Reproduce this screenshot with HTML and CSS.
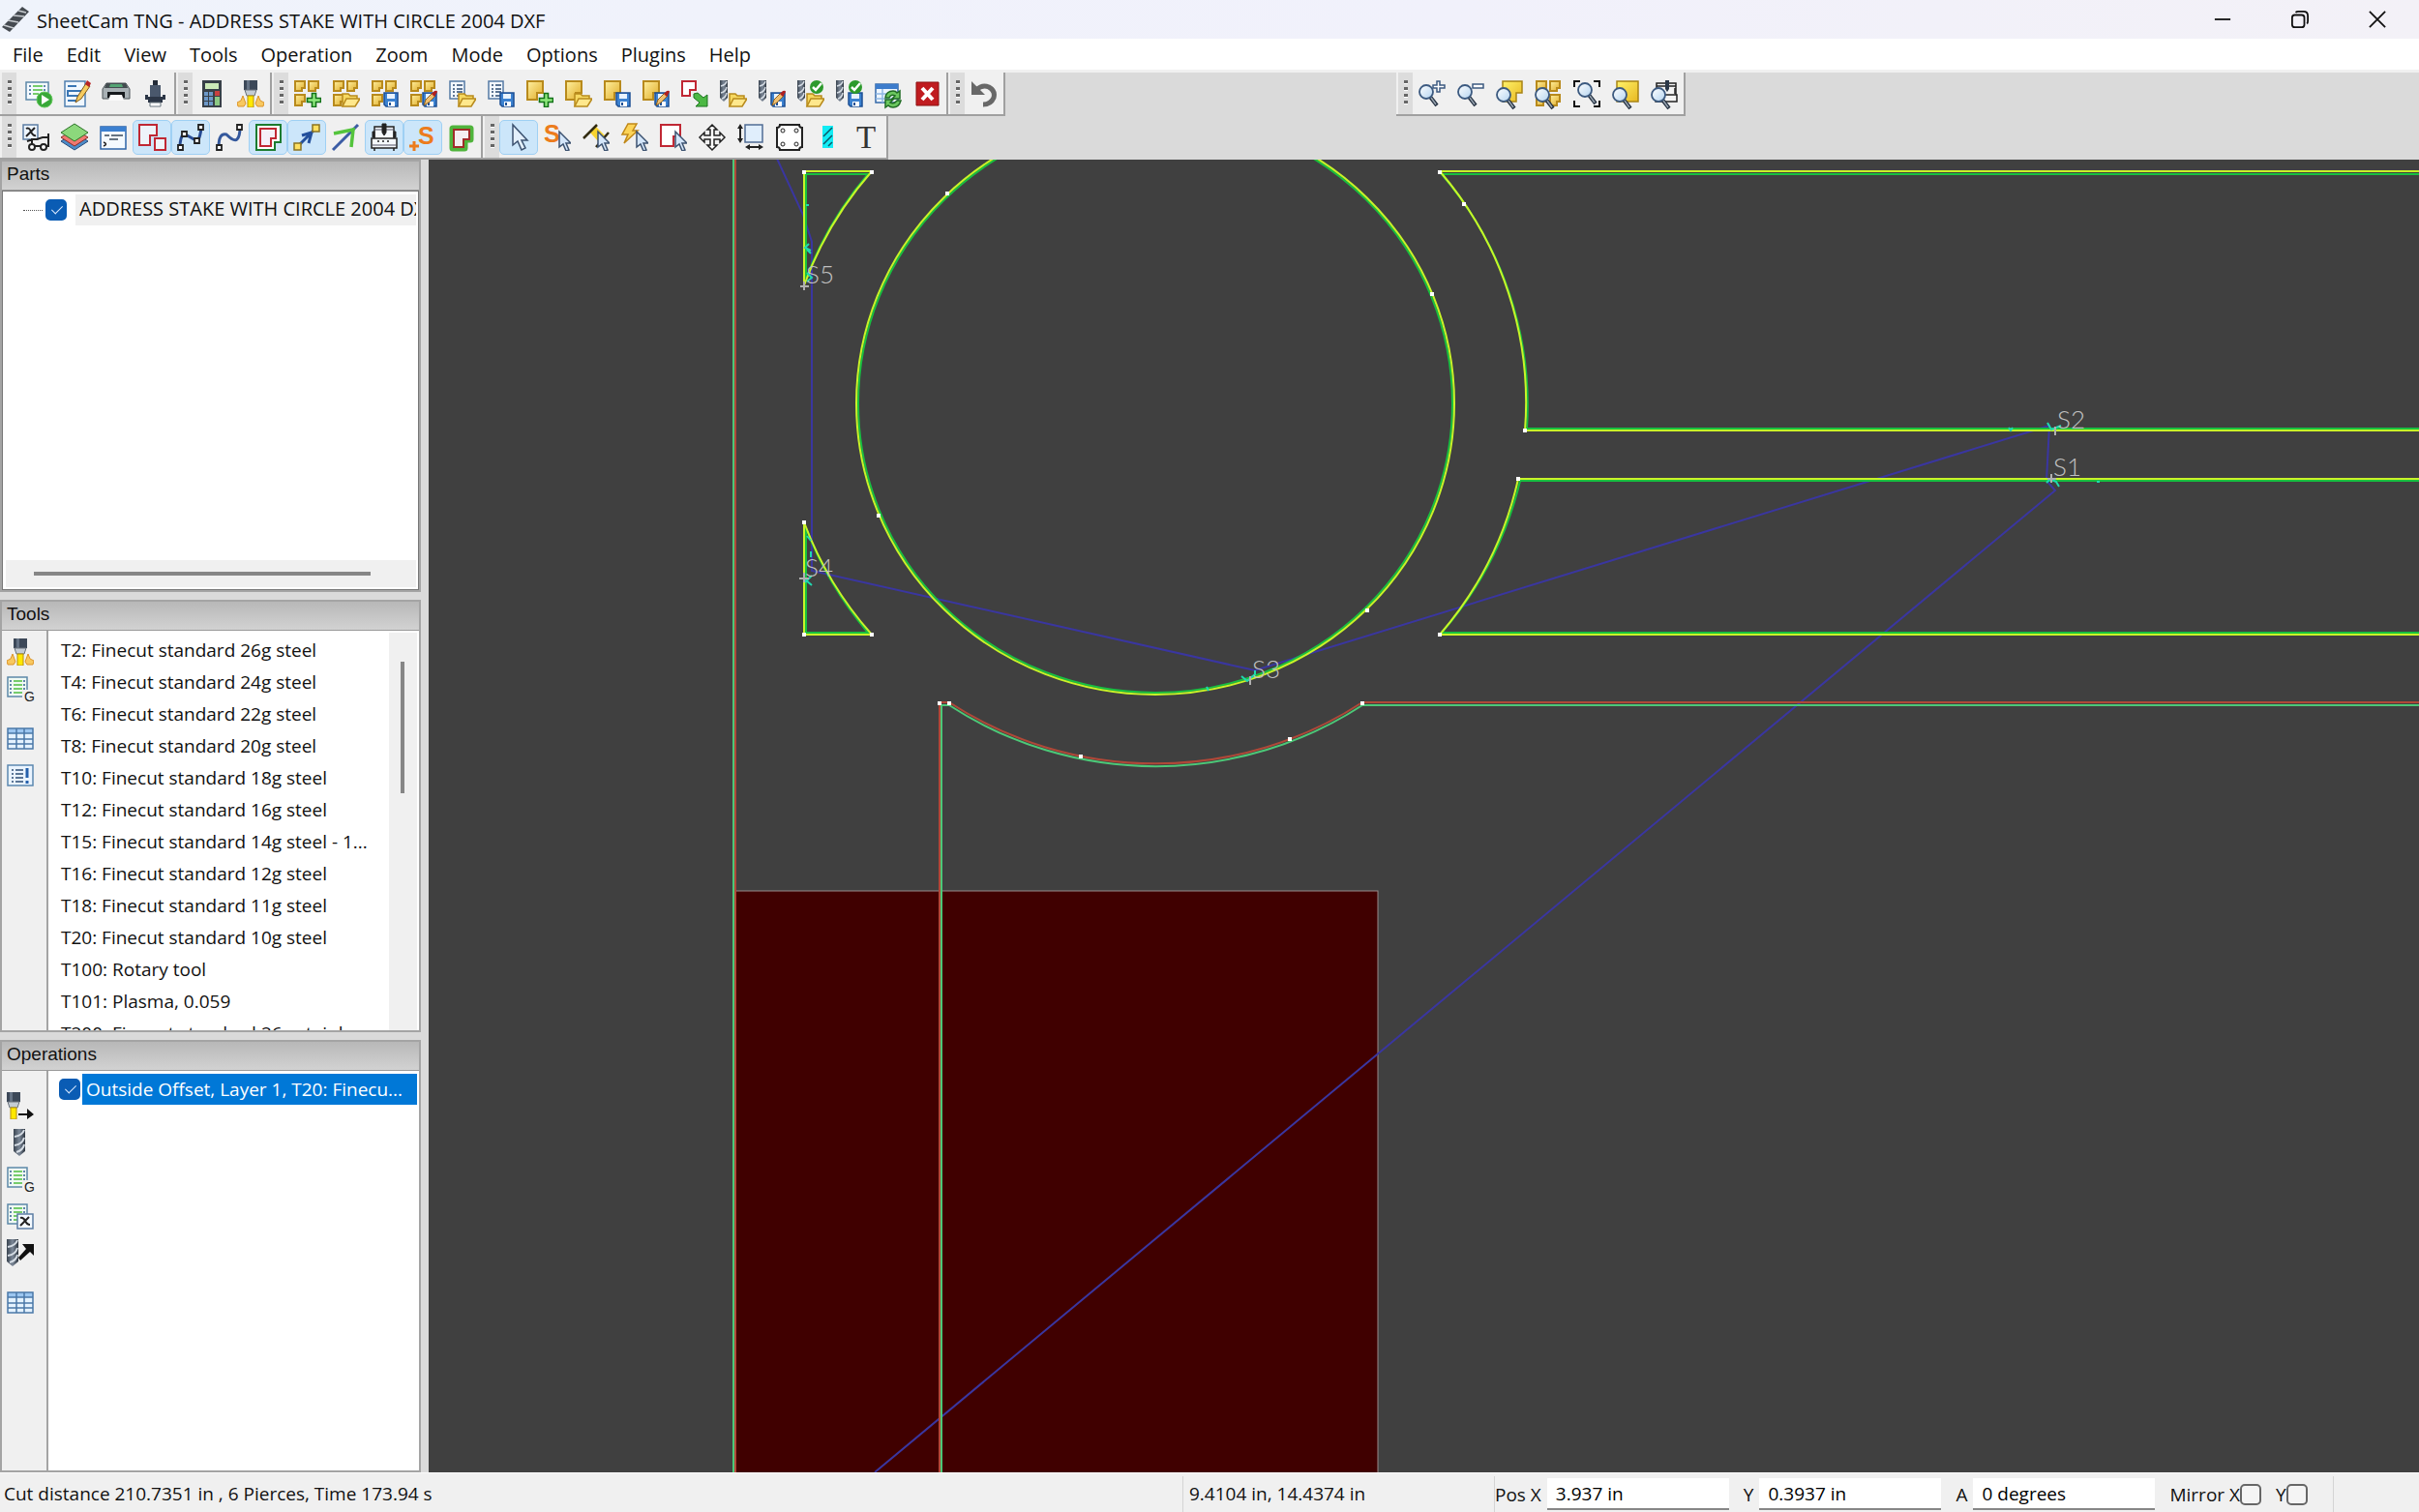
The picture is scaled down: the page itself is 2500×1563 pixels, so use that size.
FILE: index.html
```
<!DOCTYPE html>
<html lang="en">
<head>
  <meta charset="UTF-8">
  <meta name="viewport" content="width=device-width, initial-scale=1">
  <title>SheetCam TNG - ADDRESS STAKE WITH CIRCLE 2004 DXF</title>
  <link rel="stylesheet" href="styles.css">
</head>
<body>
  <!-- shared icon pieces -->
  <svg class="sprites" width="0" height="0" aria-hidden="true">
    <defs>
      <linearGradient id="gold" x1="0" y1="0" x2="1" y2="1"><stop offset="0" stop-color="#fff0a0"/><stop offset="1" stop-color="#e0ac28"/></linearGradient>
      <linearGradient id="goldBig" x1="0" y1="0" x2="1" y2="1"><stop offset="0" stop-color="#fff26a"/><stop offset="1" stop-color="#e8b820"/></linearGradient>
      <linearGradient id="steel" x1="0" x2="1"><stop offset="0" stop-color="#3a4450"/><stop offset=".5" stop-color="#7c8898"/><stop offset="1" stop-color="#2c343e"/></linearGradient>
      <linearGradient id="lens" x1="0" y1="0" x2="1" y2="1"><stop offset="0" stop-color="#fff"/><stop offset="1" stop-color="#b4d4f0"/></linearGradient>
    </defs>
    <symbol id="part" viewBox="0 0 28 28"><path d="M1 1h16v12h-6v7H1z" fill="url(#gold)" stroke="#b88a1c" stroke-width="2"/></symbol>
    <symbol id="parts" viewBox="0 0 28 28"><g fill="url(#gold)" stroke="#b88a1c" stroke-width="2"><path d="M1 1h10v7H8v3H1z"/><path d="M15 1h10v7h-3v3h-7z"/><path d="M1 15h10v7H8v4H1z"/></g></symbol>
    <symbol id="part4" viewBox="0 0 28 28"><path d="M15 15h10v7h-3v4h-7z" fill="url(#gold)" stroke="#b88a1c" stroke-width="2"/></symbol>
    <symbol id="folder" viewBox="0 0 28 28"><path d="M10 27V14h6l2 2h7v4" fill="#f6d860" stroke="#b88a1c" stroke-width="1.500"/><path d="M10 27l4-8h14l-5 8z" fill="#ffe88c" stroke="#b88a1c" stroke-width="1.500"/></symbol>
    <symbol id="disk" viewBox="0 0 28 28"><path d="M13 13h14v14H15l-2-2z" fill="#3c82d0" stroke="#1c4f94" stroke-width="1.500"/><path d="M16 14h8v5h-8z" fill="#e8f3ff"/><path d="M17 22h7v5h-7z" fill="#fff"/><path d="M18 23h2v3h-2z" fill="#1c4f94"/></symbol>
    <symbol id="plus" viewBox="0 0 28 28"><path d="M18.500 13.500h4v5h5v4h-5v5h-4v-5h-5v-4h5z" fill="#8ee87c" stroke="#127018" stroke-width="1.600"/></symbol>
    <symbol id="brush" viewBox="0 0 28 28"><path d="M14 26l2-6 7-7 3 3-7 7z" fill="#f0c070" stroke="#8c6020"/><path d="M22 14l3-3q3-1 3 1l-3 5z" fill="#b02020"/></symbol>
    <symbol id="doc" viewBox="0 0 28 28"><path d="M1 1h15v18H1z" fill="#f4f9ff" stroke="#5479a4" stroke-width="1.500"/><path d="M4 5h2m2 0h6M4 9h2m2 0h6M4 12h2m2 0h6M4 16h2m2 0h6" stroke="#2b4a70" stroke-width="1.500"/></symbol>
    <symbol id="bit" viewBox="0 0 28 28"><path d="M0 0h8v18l-4 4-4-4z" fill="url(#steel)"/><path d="M1 6q5-1 6-5M1 13q5-1 6-6M2 19q4-1 5-6" fill="none" stroke="#d5dce4" stroke-width="1.500"/></symbol>
    <symbol id="ok" viewBox="0 0 28 28"><circle cx="20" cy="7" r="7" fill="#2c9a2c"/><path d="M16 7l3 3 6-7" fill="none" stroke="#fff" stroke-width="2.500"/></symbol>
    <symbol id="glass" viewBox="0 0 28 28"><path d="M12 17l7 9" stroke="#243040" stroke-width="4"/><path d="M13 18l5 7" stroke="#98a4b0" stroke-width="1.500"/><circle cx="8" cy="12" r="7" fill="url(#lens)" stroke="#3c5a80" stroke-width="1.800"/></symbol>
    <symbol id="arrow" viewBox="0 0 28 28"><path d="M16 8v16l4-3 3 7 3-1-3-7h5z" fill="#d4e6fa" stroke="#3c5270" stroke-width="1.500"/></symbol>
    <symbol id="torch" viewBox="0 0 28 28"><path d="M7 0h14v10H7z" fill="#3c4858"/><path d="M10 0h3v10h-3z" fill="#647284"/><path d="M8 10h12l-2 6h-8z" fill="#c4ccd4" stroke="#68707a"/><path d="M11 16h6v12h-6z" fill="#ffe800" stroke="#b89000"/></symbol>
    <symbol id="sparks" viewBox="0 0 28 28"><path d="M6 16L4 21l-4 2 1 4h6l2-3zM22 16l2 5 4 2-1 4h-6l-2-3z" fill="#f8c860" stroke="#dc9428"/></symbol>
    <symbol id="sheet" viewBox="0 0 28 28"><path d="M1 2h20v20H1z" fill="#f0faf4" stroke="#5c88a8" stroke-width="1.500"/><path d="M3 6h2m12 0h2M3 10h2m12 0h2M3 14h2m12 0h2M3 18h2m12 0h2" stroke="#306090" stroke-width="1.500"/><path d="M7 6h9M7 10h9M7 14h9M7 18h9" stroke="#76cc6c" stroke-width="2"/></symbol>
    <symbol id="grid" viewBox="0 0 28 28"><path d="M1 3h26v21H1z" fill="#e4f2ff"/><path d="M1 3h26v5H1z" fill="#9cc6f0"/><path d="M1 3h26v21H1zM10 3v21M18 3v21M1 8h26M1 14h26M1 19h26" fill="none" stroke="#4a78a8" stroke-width="1.500"/></symbol>
  </svg>

  <div class="window">
    <header class="titlebar">
      <svg class="app-icon" viewBox="0 0 28 28"><path d="M0 22L21 1l7 5L8 27z" fill="#454a50"/><path d="M2 20l10 3M6 15l11 2M12 10l11 1M17 5l8 2" stroke="#c8ccd0" stroke-width="1.500"/></svg>
      <h1>SheetCam TNG - ADDRESS STAKE WITH CIRCLE 2004 DXF</h1>
      <div class="window-buttons">
        <button aria-label="Minimize"><svg viewBox="0 0 20 20"><path d="M1 10h18"/></svg></button>
        <button aria-label="Restore"><svg viewBox="0 0 20 20"><rect x="1" y="5" width="14" height="14" rx="3"/><path d="M5 2q1-1 3-1h6q5 0 5 5v6q0 2-1 3"/></svg></button>
        <button aria-label="Close"><svg viewBox="0 0 20 20"><path d="M1 1l18 18M19 1L1 19"/></svg></button>
      </div>
    </header>

    <nav class="menu">
      <a href="#file">File</a>
      <a href="#edit">Edit</a>
      <a href="#view">View</a>
      <a href="#tools">Tools</a>
      <a href="#operation">Operation</a>
      <a href="#zoom">Zoom</a>
      <a href="#mode">Mode</a>
      <a href="#options">Options</a>
      <a href="#plugins">Plugins</a>
      <a href="#help">Help</a>
    </nav>

    <div class="toolbars">
      <div class="toolbar-row">
        <div class="toolbar post-bar">
          <span class="grip"></span>
          <button aria-label="Run post"><svg viewBox="0 0 28 28"><path d="M1 2h23v18H1z" fill="#f4faff" stroke="#5c88a8" stroke-width="1.500"/><path d="M4 6h2m13 0h2M4 10h2m13 0h2M4 14h2" stroke="#306090" stroke-width="1.500"/><path d="M8 6h10M8 10h10M8 14h6" stroke="#76cc6c" stroke-width="2"/><circle cx="20" cy="20" r="8" fill="#38a838" stroke="#64c85c"/><path d="M17 15l8 5-8 5z" fill="#fff"/></svg></button>
          <button aria-label="Edit post"><svg viewBox="0 0 28 28"><path d="M1 1h21v26H1z" fill="#f0f7ff" stroke="#4f7fae" stroke-width="1.500"/><path d="M4 6h9M4 11h14v5H4zM4 21h9" fill="none" stroke="#3a76b4" stroke-width="2"/><path d="M12 23l2-6L23 3l4 3-9 13z" fill="#f6cc60" stroke="#805818"/><path d="M22 4l2-4 4 3-2 4z" fill="#b82424"/></svg></button>
          <button aria-label="Print"><svg viewBox="0 0 28 28"><path d="M4 3h20l4 6v10H0V9z" fill="#a8b0b4" stroke="#4c5458"/><path d="M4 3h20l2 5H2z" fill="#444c50"/><path d="M8 4h12l1 3H7z" fill="#54a474"/><path d="M5 12h18v6H5z" fill="#16191c"/><path d="M8 15h12l2 6H6z" fill="#fafafa"/></svg></button>
          <button aria-label="Machine"><svg viewBox="0 0 28 28"><path d="M12 0h5v5h-5z" fill="#242c38"/><path d="M9 5h11v12H9z" fill="#4a586c"/><path d="M4 15h3v2h15v-2h3v5h-3v3H7v-3H4z" fill="#2c3646"/><path d="M9 23h11v4H9z" fill="#fff" stroke="#68747e"/></svg></button>
        </div>
        <div class="toolbar">
          <span class="grip"></span>
          <button aria-label="Calculator"><svg viewBox="0 0 28 28"><path d="M4 0h20v28H4z" fill="#384048"/><path d="M7 3h14v6H7z" fill="#cceab8"/><path d="M6 12h4v4H6zM11 12h4v4h-4zM6 17h4v4H6zM11 17h4v4h-4zM6 22h4v4H6zM11 22h4v4h-4z" fill="#6c98c8"/><path d="M17 11h5v5h-5z" fill="#c84040"/><path d="M17 17h5v9h-5z" fill="#8cc884"/></svg></button>
          <button aria-label="Plasma tool"><svg viewBox="0 0 28 28"><use href="#sparks"/><use href="#torch"/></svg></button>
        </div>
        <div class="toolbar">
          <span class="grip"></span>
          <button aria-label="New job"><svg viewBox="0 0 28 28"><use href="#parts"/><use href="#plus"/></svg></button>
          <button aria-label="Open job"><svg viewBox="0 0 28 28"><use href="#parts"/><use href="#folder"/></svg></button>
          <button aria-label="Save job"><svg viewBox="0 0 28 28"><use href="#parts"/><use href="#disk"/></svg></button>
          <button aria-label="Save job as"><svg viewBox="0 0 28 28"><use href="#parts"/><use href="#disk"/><use href="#brush"/></svg></button>
          <button aria-label="Open options"><svg viewBox="0 0 28 28"><use href="#doc"/><use href="#folder"/></svg></button>
          <button aria-label="Save options"><svg viewBox="0 0 28 28"><use href="#doc"/><use href="#disk"/></svg></button>
          <button aria-label="New part"><svg viewBox="0 0 28 28"><use href="#part"/><use href="#plus"/></svg></button>
          <button aria-label="Open part"><svg viewBox="0 0 28 28"><use href="#part"/><use href="#folder"/></svg></button>
          <button aria-label="Save part"><svg viewBox="0 0 28 28"><use href="#part"/><use href="#disk"/></svg></button>
          <button aria-label="Save part as"><svg viewBox="0 0 28 28"><use href="#part"/><use href="#disk"/><use href="#brush"/></svg></button>
          <button aria-label="Import drawing"><svg viewBox="0 0 28 28"><path d="M1 1h14v9H9v6H1z" fill="#fff" stroke="#c02834" stroke-width="2"/><path d="M13 14l4-1 6 5 4-3v12H15l4-4-6-5z" fill="#4cb844" stroke="#1c7420"/></svg></button>
          <button aria-label="Open tools"><svg viewBox="0 0 28 28"><use href="#bit"/><use href="#folder"/></svg></button>
          <button aria-label="Save tools"><svg viewBox="0 0 28 28"><use href="#bit"/><use href="#disk"/><use href="#brush"/></svg></button>
          <button aria-label="Open default tools"><svg viewBox="0 0 28 28"><use href="#bit"/><use href="#folder"/><use href="#ok"/></svg></button>
          <button aria-label="Save default tools"><svg viewBox="0 0 28 28"><use href="#bit"/><use href="#disk"/><use href="#ok"/></svg></button>
          <button aria-label="Reload"><svg viewBox="0 0 28 28"><path d="M1 4h23v19H1z" fill="#eef6ff" stroke="#3468a8" stroke-width="1.500"/><path d="M1 4h23v5H1z" fill="#3c7ccc"/><path d="M1 14h22M1 19h22M8 9v14" stroke="#90b8e4" stroke-width="1.500"/><path d="M11 18q1-7 8-7 3 0 4 2l3-2v8h-8l3-3q-4-2-6 2zM27 21q-2 7-8 7-3 0-5-2l-3 2v-8h8l-3 3q4 2 7-2z" fill="#6cc860" stroke="#206c24" stroke-width="1.500"/></svg></button>
          <button aria-label="Close job"><svg viewBox="0 0 28 28"><path d="M3 2h23v24H3z" fill="#c01c20" stroke="#8c1010"/><path d="M9 8l11 12M20 8L9 20" stroke="#fff" stroke-width="4"/></svg></button>
        </div>
        <div class="toolbar">
          <span class="grip"></span>
          <button aria-label="Undo"><svg viewBox="0 0 28 28"><path d="M6 10q6-6 13-3 7 4 5 11-3 7-11 7" fill="none" stroke="#686868" stroke-width="5"/><path d="M1 1v14h14z" fill="#686868"/></svg></button>
        </div>
        <div class="toolbar zoom-bar">
          <span class="grip"></span>
          <button aria-label="Zoom in"><svg viewBox="0 0 28 28"><use href="#glass"/><path d="M19 1h3v4h5v3h-5v4h-3V8h-4V5h4z" fill="#fff" stroke="#3c5a80" stroke-width="1.500"/></svg></button>
          <button aria-label="Zoom out"><svg viewBox="0 0 28 28"><use href="#glass"/><path d="M16 4h11v4H16z" fill="#fff" stroke="#3c5a80" stroke-width="1.500"/></svg></button>
          <button aria-label="Zoom to part"><svg viewBox="0 0 28 28"><path d="M7 1h20v12h-6v9H7z" fill="url(#goldBig)" stroke="#a88414" stroke-width="1.500"/><use href="#glass" y="3"/></svg></button>
          <button aria-label="Zoom to job"><svg viewBox="0 0 28 28"><use href="#parts" x="1"/><use href="#part4" x="1"/><use href="#glass" y="3"/></svg></button>
          <button aria-label="Zoom to window"><svg viewBox="0 0 28 28"><use href="#glass" x="4" y="-2"/><path d="M1 7V1h6M21 1h6v6M1 21v6h6M21 27h6v-6" fill="none" stroke="#111" stroke-width="2"/></svg></button>
          <button aria-label="Zoom to material"><svg viewBox="0 0 28 28"><path d="M5 1h22v21H5z" fill="url(#goldBig)" stroke="#a88414" stroke-width="1.500"/><use href="#glass" y="3"/></svg></button>
          <button aria-label="Zoom to machine"><svg viewBox="0 0 28 28"><path d="M6 3h20v12H6zM5 15h22v7H5z" fill="#f4f4f4" stroke="#222" stroke-width="1.500"/><path d="M6 6h20M7 8v6M25 8v6" stroke="#222" stroke-width="1.500"/><path d="M15 0h4v9l-2 3-2-3z" fill="#2c3848"/><use href="#glass" y="3"/></svg></button>
        </div>
      </div>

      <div class="toolbar-row">
        <div class="toolbar">
          <span class="grip"></span>
          <button aria-label="Set variables"><svg viewBox="0 0 28 28"><path d="M1 1h15v15H1z" fill="#eef6ff" stroke="#5c7ea4" stroke-width="1.500"/><path d="M4 5q3-2 5 3t5 4M13 4L4 13" fill="none" stroke="#222" stroke-width="2"/><path d="M27 10v13H10v-7h5l6-2h6M5 18l6-2" fill="none" stroke="#222" stroke-width="2"/><circle cx="10" cy="24" r="3" fill="#fff" stroke="#222" stroke-width="2"/><circle cx="22" cy="24" r="3" fill="#fff" stroke="#222" stroke-width="2"/></svg></button>
          <button aria-label="Layers"><svg viewBox="0 0 28 28"><path d="M14 9l14 9-14 9-14-9z" fill="#4c8cc8" stroke="#284c7c"/><path d="M14 5l14 9-14 9-14-9z" fill="#f07870" stroke="#8c2c28"/><path d="M14 0l14 9-14 9L0 9z" fill="#8cd87c" stroke="#2c7428"/></svg></button>
          <button aria-label="Code window"><svg viewBox="0 0 28 28"><path d="M1 3h26v23H1z" fill="#f4faff" stroke="#2c64a8" stroke-width="1.500"/><path d="M1 3h26v5H1z" fill="#3c80d0"/><path d="M5 12h5m2 0h12M10 16h9" stroke="#384858" stroke-width="1.500"/><path d="M4 19q5 2 0 4" fill="none" stroke="#222" stroke-width="1.500"/></svg></button>
          <button class="on" aria-label="Show parts"><svg viewBox="0 0 28 28"><g fill="#eef4fa" stroke="#c02834" stroke-width="2"><path d="M1 1h18v11h-7v10H1z"/><path d="M17 15h11v12H17z"/></g></svg></button>
          <button class="on" aria-label="Show nodes"><svg viewBox="0 0 28 28"><path d="M3 24q0-10 4-14l14 8q3-4 4-14" fill="none" stroke="#284c94" stroke-width="3"/><g fill="#fff" stroke="#222" stroke-width="1.800"><path d="M1 22h5v5H1zM5 8h5v5H5zM18 15h5v5h-5zM22 1h5v5h-5z"/></g></svg></button>
          <button aria-label="Show path ends"><svg viewBox="0 0 28 28"><path d="M3 24q0-15 8-13 8 8 11 5 3-3 3-12" fill="none" stroke="#34589c" stroke-width="3"/><g fill="#fff" stroke="#222" stroke-width="1.800"><path d="M1 22h5v5H1zM22 1h5v5h-5z"/></g></svg></button>
          <button class="on" aria-label="Show tool width"><svg viewBox="0 0 28 28"><path d="M2 1h25v18h-6v8H2z" fill="#fff" stroke="#1c7c30" stroke-width="2"/><path d="M6 5h16v10h-5v8H6z" fill="#f4f0f8" stroke="#c02834" stroke-width="2"/></svg></button>
          <button class="on" aria-label="Show rapids"><svg viewBox="0 0 28 28"><path d="M4 24L23 5M9 12l10-3-3 11" fill="none" stroke="#24509c" stroke-width="3"/><g fill="#ffe060" stroke="#8c7420" stroke-width="1.500"><path d="M1 20h7v7H1zM20 1h7v7h-7z"/></g></svg></button>
          <button aria-label="Show direction"><svg viewBox="0 0 28 28"><path d="M1 27L27 1" stroke="#3c5ca4" stroke-width="3"/><path d="M2 10l20-4-2 18" fill="none" stroke="#54c43c" stroke-width="3.500"/></svg></button>
          <button class="on" aria-label="Show machine"><svg viewBox="0 0 28 28"><path d="M4 3h20v12H4zM1 15h26v10H1z" fill="#f4f8fc" stroke="#222" stroke-width="1.500"/><path d="M4 6h20M2 22h24" stroke="#556"/><path d="M2 8h2v6H2zM24 8h2v6h-2zM12 0h4v9l-2 3-2-3z" fill="#222" stroke="#222"/><path d="M7 18h2m3 0h2m3 0h2M4 25v3m20-3v3" stroke="#222" stroke-width="1.500"/></svg></button>
          <button class="on" aria-label="Show start points"><svg viewBox="0 0 28 28"><text class="icon-s" x="9" y="21">S</text><path d="M5 18v10M0 23h10" stroke="#ec7c1c" stroke-width="3"/></svg></button>
          <button aria-label="Show cut width"><svg viewBox="0 0 28 28"><path d="M5 5h18v11h-6v9H5z" fill="#fff" stroke="#50b43c" stroke-width="7" stroke-linejoin="round"/><path d="M6 6h16v10h-6v8H6z" fill="#f4eef0" stroke="#a02c28" stroke-width="2"/></svg></button>
        </div>
        <div class="toolbar">
          <span class="grip"></span>
          <button class="on" aria-label="Select"><svg viewBox="0 0 28 28"><path d="M8 1v21l5-4 4 9 4-2-4-8h6z" fill="#e4f0fc" stroke="#3c5270" stroke-width="1.500"/></svg></button>
          <button aria-label="Edit start points"><svg viewBox="0 0 28 28"><text class="icon-s" x="0" y="19">S</text><use href="#arrow"/></svg></button>
          <button aria-label="Edit tabs"><svg viewBox="0 0 28 28"><path d="M8 9l6-6 9 9-6 7z" fill="#f8d430"/><path d="M1 15L15 1M14 24L27 9" stroke="#332c10" stroke-width="2.500"/><use href="#arrow"/></svg></button>
          <button aria-label="Edit cutting order"><svg viewBox="0 0 28 28"><path d="M7 0h9l-4 7h5L3 20l4-9H1z" fill="#fcd458" stroke="#c08818" stroke-width="1.500"/><use href="#arrow"/></svg></button>
          <button aria-label="Edit contours"><svg viewBox="0 0 28 28"><path d="M1 1h20v12h-7v10H1z" fill="#fff" stroke="#c02834" stroke-width="2"/><use href="#arrow"/></svg></button>
          <button aria-label="Move parts"><svg viewBox="0 0 28 28"><path d="M14 1l5 5h-3v6h6V9l5 5-5 5v-3h-6v6h3l-5 5-5-5h3v-6H6v3l-5-5 5-5v3h6V6H9z" fill="#fff" stroke="#222" stroke-width="1.500"/></svg></button>
          <button aria-label="Set origin"><svg viewBox="0 0 28 28"><path d="M8 1h18v18H8z" fill="#e0eefc" stroke="#506c94" stroke-width="1.500"/><path d="M3 2v15M10 24h15" stroke="#222" stroke-width="2"/><path d="M0 5l3-5 3 5zM0 15l3 5 3-5zM13 21l-5 3 5 3zM22 21l5 3-5 3z" fill="#222"/></svg></button>
          <button aria-label="Nesting"><svg viewBox="0 0 28 28"><path d="M4 1h20q0 3 3 3v20q-3 0-3 3H4q0-3-3-3V4q3 0 3-3z" fill="#fff" stroke="#222" stroke-width="2"/><g fill="none" stroke="#222"><circle cx="7" cy="7" r="2"/><circle cx="21" cy="7" r="2"/><circle cx="7" cy="21" r="2"/><circle cx="21" cy="21" r="2"/></g></svg></button>
          <button aria-label="Measure"><svg viewBox="0 0 28 28"><path d="M8 2h11v23H8z" fill="#12ecf4"/><path d="M9 13l9-9M9 21l9-9M14 23l4-4" stroke="#0c5868" stroke-width="1.500"/></svg></button>
          <button aria-label="Text"><svg viewBox="0 0 28 28"><text class="icon-t" x="3" y="25">T</text></svg></button>
        </div>
      </div>
    </div>

    <main>
      <aside>
        <section class="panel">
          <h2>Parts</h2>
          <div class="panel-body tree">
            <div class="tree-row">
              <span class="branch"></span>
              <input type="checkbox" id="part1" checked>
              <label for="part1">ADDRESS STAKE WITH CIRCLE 2004 DXF</label>
            </div>
            <div class="h-scroll"><span></span></div>
          </div>
        </section>

        <section class="panel">
          <h2>Tools</h2>
          <div class="panel-body">
            <div class="side-tools">
              <button aria-label="New plasma tool"><svg viewBox="0 0 28 28"><use href="#sparks"/><use href="#torch"/></svg></button>
              <button aria-label="New code tool"><svg viewBox="0 0 28 28"><use href="#sheet"/><path d="M16 15h12v13H16z" fill="#f0f0f0"/><text class="icon-g" x="18" y="27">G</text></svg></button>
              <button class="spaced" aria-label="Tool table"><svg viewBox="0 0 28 28"><use href="#grid"/></svg></button>
              <button aria-label="Tool notes"><svg viewBox="0 0 28 28"><path d="M1 3h26v21H1z" fill="#eaf4ff" stroke="#5c88b0" stroke-width="1.500"/><path d="M5 8h2m2 0h8M5 12h2m2 0h8M5 16h2m2 0h8M5 20h2m2 0h8" stroke="#2c4c74" stroke-width="1.500"/><path d="M21 6v10M21 19v3" stroke="#2460ac" stroke-width="3"/></svg></button>
            </div>
            <ul class="list">
              <li>T2: Finecut standard 26g steel</li>
              <li>T4: Finecut standard 24g steel</li>
              <li>T6: Finecut standard 22g steel</li>
              <li>T8: Finecut standard 20g steel</li>
              <li>T10: Finecut standard 18g steel</li>
              <li>T12: Finecut standard 16g steel</li>
              <li>T15: Finecut standard 14g steel - 1...</li>
              <li>T16: Finecut standard 12g steel</li>
              <li>T18: Finecut standard 11g steel</li>
              <li>T20: Finecut standard 10g steel</li>
              <li>T100: Rotary tool</li>
              <li>T101: Plasma, 0.059</li>
              <li>T200: Finecut standard 26g stainl</li>
            </ul>
            <div class="v-scroll"><span></span></div>
          </div>
        </section>

        <section class="panel">
          <h2>Operations</h2>
          <div class="panel-body">
            <div class="side-tools lower">
              <button aria-label="New cut"><svg viewBox="0 0 28 28"><use href="#torch" x="-7"/><path d="M12 22h9v-5l7 6-7 5v-4h-9z" fill="#111"/></svg></button>
              <button aria-label="New drill"><svg viewBox="0 0 28 28"><path d="M7 0h12v23l-6 5-6-5z" fill="url(#steel)"/><path d="M8 8q8-1 10-7M8 17q8-1 10-8M10 24q7-2 8-8" fill="none" stroke="#d5dce4" stroke-width="2"/></svg></button>
              <button aria-label="New code"><svg viewBox="0 0 28 28"><use href="#sheet"/><path d="M16 15h12v13H16z" fill="#f0f0f0"/><text class="icon-g" x="18" y="27">G</text></svg></button>
              <button aria-label="New variable"><svg viewBox="0 0 28 28"><use href="#sheet"/><path d="M11 12h16v15H11z" fill="#f4faff" stroke="#5c7ea4" stroke-width="1.500"/><path d="M14 16q3-1 5 3t5 4M23 15l-9 9" fill="none" stroke="#222" stroke-width="2"/></svg></button>
              <button aria-label="Move tool"><svg viewBox="0 0 28 28"><path d="M0 0h12v23l-6 5-6-5z" fill="url(#steel)"/><path d="M1 8q8-1 10-7M1 17q8-1 10-8M3 24q7-2 8-8" fill="none" stroke="#d5dce4" stroke-width="2"/><path d="M12 19l8-9-4-5h12v12l-4-4-10 9z" fill="#111"/></svg></button>
              <button class="spaced" aria-label="Operation table"><svg viewBox="0 0 28 28"><use href="#grid"/></svg></button>
            </div>
            <div class="operations">
              <input type="checkbox" id="op1" checked>
              <label for="op1">Outside Offset, Layer 1, T20: Finecu...</label>
            </div>
          </div>
        </section>
      </aside>

      <svg class="drawing" viewBox="443 165 2057 1357" preserveAspectRatio="xMinYMin slice" role="img" aria-label="Part drawing">
        <!-- material -->
        <rect x="760" y="921" width="664" height="620" fill="#400000" stroke="#9a8a8a"/>
        <path class="red" d="M760 164V1540"/>
        <path class="mint" d="M758 164V1540"/>

        <!-- rapid moves -->
        <path class="rapid" d="M803 164L830 222L839 250V590L1297 693L2118 440L2115 497L2124 507L904 1522"/>

        <!-- outside contour -->
        <path class="red" d="M971 1540V726H981A383 373 0 0 0 1408 726H2520"/>
        <path class="mint" d="M973 1540V729H981A384 374 0 0 0 1408 729H2520"/>

        <!-- inside contours -->
        <g class="green">
          <ellipse cx="1194" cy="417" rx="307" ry="299"/>
          <path d="M833 180H897A383 373 0 0 0 833 288Z"/>
          <path d="M833 546V654H897A383 373 0 0 1 833 546Z"/>
          <path d="M2520 180H1490A384 374 0 0 1 1578 443H2520"/>
          <path d="M2520 497H1571A384 374 0 0 1 1490 654H2520"/>
        </g>
        <g class="yellow">
          <ellipse cx="1194" cy="417" rx="309" ry="301"/>
          <path d="M831 177H901A383 373 0 0 0 831 295Z"/>
          <path d="M831 540V656H901A383 373 0 0 1 831 540Z"/>
          <path d="M2520 177H1488A383 373 0 0 1 1576 445H2520"/>
          <path d="M2520 495H1569A383 373 0 0 1 1488 656H2520"/>
        </g>

        <!-- nodes -->
        <path class="node" d="M831 178h0M901 178h0M831 540h0M831 656h0M901 656h0M979 200h0M908 533h0M1413 631h0M1480 304h0M1488 178h0M1513 211h0M1576 445h0M1569 495h0M1488 656h0M971 727h0M981 727h0M1117 782h0M1333 764h0M1408 727h0"/>

        <!-- start points -->
        <path class="lead" d="M833 212h3M836 252l-4 4 6 3M838 262l-4-4M834 282l5 5-5 4M834 554l4 5M838 570v6M832 602l7-7M832 599l7 6M1283 699l6 5 8-7v-4M1247 710l2 4M2116 437l4 7 10-4M2076 442l2 3 2-3M2115 499l4-4 6 3 3 5M2167 498h3"/>
        <path class="start" d="M831 291v9M827 296h9M831 592v10M826 598h10M1292 699v9M2124 441v9M2120 490v9M2116 495h9"/>
        <g class="label">
          <text x="833" y="293">S5</text>
          <text x="832" y="596">S4</text>
          <text x="1294" y="701">S3</text>
          <text x="2126" y="443">S2</text>
          <text x="2122" y="492">S1</text>
        </g>
      </svg>
    </main>

    <footer class="status">
      <span class="summary">Cut distance 210.7351 in , 6 Pierces, Time 173.94 s</span>
      <span class="cursor-pos">9.4104 in, 14.4374 in</span>
      <div class="position">
        <label for="posx">Pos X</label><input type="text" id="posx" value="3.937 in">
        <label for="posy">Y</label><input type="text" id="posy" value="0.3937 in">
        <label for="posa">A</label><input type="text" id="posa" value="0 degrees">
        <label for="mirx">Mirror X</label><input type="checkbox" id="mirx">
        <label for="miry">Y</label><input type="checkbox" id="miry">
      </div>
      <span class="status-end"></span>
    </footer>
  </div>
</body>
</html>
```
FILE: styles.css
```
* {
  box-sizing: border-box;
}

body {
  margin: 0;
  font-family: "Open Sans", "Noto Sans", sans-serif;
  font-size: 19px;
  color: #111;
}

button {
  padding: 0;
  border: 0;
  background: none;
}

svg {
  overflow: visible;
}

.sprites {
  position: absolute;
}

.window {
  display: flex;
  flex-direction: column;
  height: 100vh;
  overflow: hidden;
}

/* title bar and menu */
.titlebar {
  display: flex;
  align-items: center;
  flex: none;
  height: 40px;
  padding: 0 13px 0 2px;
  background: linear-gradient(90deg, #eff3fb, #f1f1fb 60%, #f3f1f7);
}

.app-icon {
  width: 28px;
  height: 28px;
}

h1 {
  flex: 1;
  margin: 2px 0 0 8px;
  font-size: 20px;
  font-weight: 400;
}

.window-buttons {
  display: flex;
  gap: 20px;
}

.window-buttons button {
  display: grid;
  place-items: center;
  width: 60px;
  height: 40px;
}

.window-buttons svg {
  width: 18px;
  height: 18px;
  fill: none;
  stroke: #111;
  stroke-width: 2;
}

.menu {
  display: flex;
  align-items: center;
  flex: none;
  gap: 24px;
  height: 35px;
  padding: 0 13px;
  background: #fff;
  border-bottom: 3px solid #f0f0f0;
  font-size: 20px;
}

.menu a {
  color: #111;
  text-decoration: none;
}

/* toolbars */
.toolbars {
  flex: none;
  height: 90px;
  background: #dadada;
}

.toolbar-row {
  display: flex;
  height: 45px;
}

.toolbar {
  display: flex;
  align-items: center;
  padding-left: 2px;
  background: #f0f0f0;
  border-right: 2px solid #a0a0a0;
  border-bottom: 2px solid #a0a0a0;
}

.toolbar button {
  width: 40px;
  height: 36px;
  padding: 2px 5px;
  border: 1px solid transparent;
  border-radius: 5px;
}

.toolbar button.on {
  background: #cce6fa;
  border-color: #9fd0f4;
}

.toolbar svg {
  display: block;
  width: 28px;
  height: 28px;
}

.post-bar .grip {
  margin-right: 3px;
}

.grip {
  align-self: stretch;
  display: grid;
  place-items: center;
  width: 15px;
  background: #dcdcdc;
}

.grip::before {
  content: "";
  width: 4px;
  height: 28px;
  background: repeating-linear-gradient(#666 0 3px, #fff 3px 4px, transparent 4px 7px);
}

.zoom-bar {
  margin-left: 404px;
}

.icon-s {
  font: bold 25px "Liberation Sans", sans-serif;
  fill: #ec7c1c;
}

.icon-t {
  font: 33px "Liberation Serif", serif;
  fill: #333;
}

.icon-g {
  font: 14px "Liberation Sans", sans-serif;
  fill: #222;
}

/* left hand panels */
main {
  display: flex;
  flex: 1;
  min-height: 0;
}

aside {
  display: flex;
  flex-direction: column;
  flex: none;
  gap: 8px;
  width: 443px;
  padding-right: 8px;
  background: #dadada;
}

.panel {
  display: flex;
  flex-direction: column;
  flex: 1;
  min-height: 0;
  border: 2px solid #a4a4a4;
}

.panel h2 {
  flex: none;
  height: 30px;
  margin: 0;
  padding-left: 5px;
  background: linear-gradient(#b8b8b8, #d2d2d2);
  border-bottom: 1px solid #999;
  font: 19px/26px "Liberation Sans", sans-serif;
}

.panel-body {
  display: flex;
  flex: 1;
  min-height: 0;
  background: #fff;
  border-right: 2px solid #fff;
}

.tree {
  flex-direction: column;
  justify-content: space-between;
  padding: 3px 0 2px 3px;
  border: 1px solid #777;
}

.tree-row {
  display: flex;
  align-items: center;
  height: 32px;
  padding-left: 18px;
}

.branch {
  flex: none;
  width: 20px;
  margin-right: 3px;
  border-top: 1px dotted #555;
}

.tree-row label {
  flex: 1;
  height: 32px;
  margin: 0 2px 0 9px;
  padding-left: 4px;
  overflow: hidden;
  background: #f0f0f0;
  font-size: 20px;
  line-height: 30px;
  white-space: nowrap;
}

input[type="checkbox"] {
  flex: none;
  appearance: none;
  width: 22px;
  height: 22px;
  margin: 0;
  border: 2px solid #666;
  border-radius: 5px;
  background: #f4f4f4;
}

input[type="checkbox"]:checked {
  border-color: #0a5cb4;
  background: #0a5cb4;
}

input[type="checkbox"]:checked::before {
  content: "";
  display: block;
  width: 5px;
  height: 10px;
  margin: 2px 0 0 7px;
  border: solid #dceaff;
  border-width: 0 1px 1px 0;
  transform: rotate(45deg);
}

.h-scroll {
  height: 28px;
  margin-right: 2px;
  padding: 12px 47px 0 29px;
  background: #f0f0f0;
}

.h-scroll span {
  display: block;
  height: 4px;
  background: #868686;
}

.side-tools {
  display: flex;
  flex-direction: column;
  flex: none;
  gap: 10px;
  width: 48px;
  padding: 8px 5px;
  background: #f0f0f0;
  border-right: 2px solid #a4a4a4;
}

.side-tools.lower {
  padding-top: 22px;
}

.side-tools button {
  width: 28px;
  height: 28px;
}

.side-tools svg {
  display: block;
}

.side-tools .spaced {
  margin-top: 14px;
}

.list {
  flex: 1;
  margin: 0;
  padding: 4px 0 0 13px;
  overflow: hidden;
  list-style: none;
  line-height: 33px;
  white-space: nowrap;
}

.v-scroll {
  width: 29px;
  margin-top: 2px;
  padding: 30px 12px 0;
  background: #f0f0f0;
}

.v-scroll span {
  display: block;
  width: 4px;
  height: 136px;
  background: #868686;
}

.operations {
  display: flex;
  align-items: center;
  flex: 1;
  gap: 2px;
  height: 32px;
  margin-top: 3px;
  padding-left: 11px;
}

.operations label {
  flex: 1;
  padding-left: 4px;
  overflow: hidden;
  background: #0078d7;
  color: #fff;
  line-height: 32px;
  white-space: nowrap;
}

/* drawing area */
.drawing {
  flex: 1;
  min-width: 0;
  height: 100%;
  overflow: hidden;
  background: #404040;
  fill: none;
}

.drawing path,
.drawing ellipse {
  stroke-width: 2;
}

.drawing .red {
  stroke: #b04838;
}

.drawing .mint {
  stroke: #4cc878;
}

.drawing .green {
  stroke: #18c040;
}

.drawing .yellow {
  stroke: #c8f428;
}

.drawing .rapid {
  stroke: #3a36a0;
}

.drawing .lead {
  stroke: #20d8b0;
}

.drawing .start {
  stroke: #b0b0b0;
}

.drawing .node {
  stroke: #fff;
  stroke-width: 4;
  stroke-linecap: square;
}

.label {
  fill: #c0c0c0;
  font-family: Lato, sans-serif;
  font-size: 26px;
  font-weight: 300;
}

/* status bar */
.status {
  display: flex;
  flex: none;
  height: 41px;
  padding-top: 3px;
  background: #f0f0f0;
  border-top: 1px solid #fafafa;
  line-height: 36px;
}

.summary {
  flex: 1;
  padding-left: 4px;
}

.cursor-pos {
  width: 322px;
  padding-left: 6px;
  border-left: 1px solid #d4d4d4;
}

.position {
  display: flex;
  align-items: center;
  width: 867px;
  border-left: 1px solid #d4d4d4;
}

.position input[type="text"] {
  width: 188px;
  height: 33px;
  margin: 0 15px 0 6px;
  padding: 0 9px;
  border: 0;
  border-bottom: 2px solid #868686;
  background: #fff;
  font: inherit;
}

.position input[type="checkbox"] {
  margin-right: 15px;
}

.status-end {
  width: 89px;
  border-left: 1px solid #d4d4d4;
}
```
